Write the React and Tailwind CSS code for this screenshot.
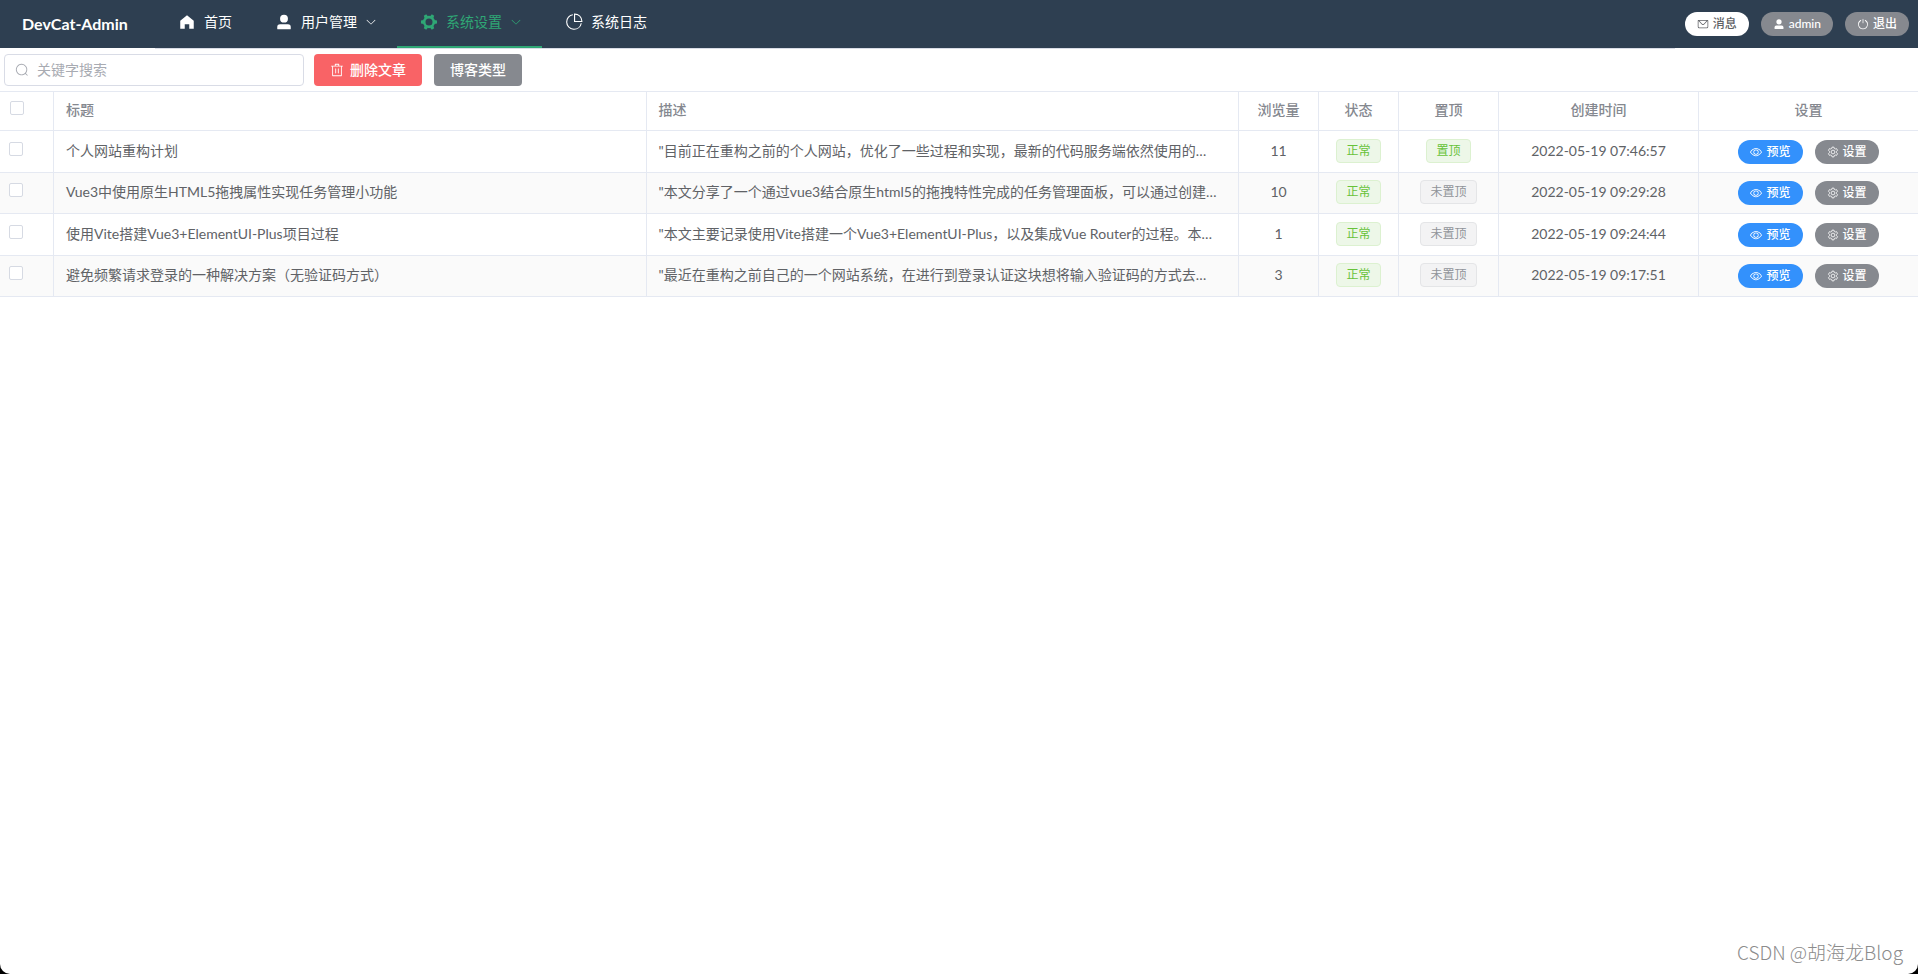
import React from "react";

const icons = {
  home: "M512 128 128 447.936V896h255.936V640H640v256h255.936V447.936z",
  user: "M288 320a224 224 0 1 0 448 0 224 224 0 1 0-448 0zm544 608H160a32 32 0 0 1-32-32v-96a160 160 0 0 1 160-160h448a160 160 0 0 1 160 160v96a32 32 0 0 1-32 32z",
  down: "M831.872 340.864 512 652.672 192.128 340.864a30.592 30.592 0 0 0-42.752 0 29.12 29.12 0 0 0 0 41.6L489.664 714.24a32 32 0 0 0 44.672 0l340.288-331.712a29.12 29.12 0 0 0 0-41.728 30.592 30.592 0 0 0-42.752 0z",
  pie: "M448 68.48v64.832A384.128 384.128 0 0 0 512 896a384.128 384.128 0 0 0 378.688-320h64.768A448.128 448.128 0 0 1 64 512 448.128 448.128 0 0 1 448 68.48zM576 97.28V448h350.72A384.064 384.064 0 0 0 576 97.28zM512 64V33.152A448 448 0 0 1 990.848 512H512V64z",
  message:
    "M128 224v512a64 64 0 0 0 64 64h640a64 64 0 0 0 64-64V224H128zm0-64h768a64 64 0 0 1 64 64v512a128 128 0 0 1-128 128H192A128 128 0 0 1 64 736V224a64 64 0 0 1 64-64zM904 224 656.512 506.88a192 192 0 0 1-289.024 0L120 224h784zm-698.944 0 210.56 240.704a128 128 0 0 0 192.704 0L818.944 224H205.056z",
  power:
    "M352 159.872V230.4a352 352 0 1 0 320 0v-70.528A416.128 416.128 0 0 1 512 960a416 416 0 0 1-160-800.128zM512 64q32 0 32 32v320q0 32-32 32t-32-32V96q0-32 32-32z",
  view: "M512 160c320 0 512 352 512 352S832 864 512 864 0 512 0 512s192-352 512-352zm0 64c-225.28 0-384.128 208.064-436.8 288 52.608 79.872 211.456 288 436.8 288 225.28 0 384.128-208.064 436.8-288-52.608-79.872-211.456-288-436.8-288zm0 64a224 224 0 1 1 0 448 224 224 0 0 1 0-448zm0 64a160.192 160.192 0 0 0-160 160c0 88.192 71.744 160 160 160s160-71.808 160-160-71.744-160-160-160z",
  search:
    "m795.904 750.72 124.992 124.928a32 32 0 0 1-45.248 45.248L750.656 795.904a416 416 0 1 1 45.248-45.248zM480 832a352 352 0 1 0 0-704 352 352 0 0 0 0 704z",
  trash:
    "M160 256H96a32 32 0 0 1 0-64h256V95.936a32 32 0 0 1 32-32h256a32 32 0 0 1 32 32V192h256a32 32 0 1 1 0 64h-64v672a32 32 0 0 1-32 32H192a32 32 0 0 1-32-32V256zm448-64v-64H416v64h192zM224 896h576V256H224v640zm192-128a32 32 0 0 1-32-32V416a32 32 0 0 1 64 0v320a32 32 0 0 1-32 32zm192 0a32 32 0 0 1-32-32V416a32 32 0 0 1 64 0v320a32 32 0 0 1-32 32z",
};

function Icon({ name, className }) {
  return (
    <svg viewBox="0 0 1024 1024" fill="currentColor" aria-hidden="true" className={className}>
      <path d={icons[name]} />
    </svg>
  );
}

function GearSolid({ className }) {
  return (
    <svg viewBox="0 0 1024 1024" aria-hidden="true" className={className}>
      <circle cx="512" cy="512" r="275" fill="none" stroke="currentColor" strokeWidth="150" />
      <g fill="currentColor">
        {[30, 90, 150, 210, 270, 330].map((angle) => (
          <path key={angle} d="M432 56h160l28 160H404z" transform={`rotate(${angle} 512 512)`} />
        ))}
      </g>
    </svg>
  );
}

function GearOutline({ className }) {
  return (
    <svg viewBox="0 0 1024 1024" fill="none" stroke="currentColor" strokeWidth="70" strokeLinejoin="round" aria-hidden="true" className={className}>
      <path d="M432 96h160l34 116 74 43 118-29 80 139-84 87v120l84 87-80 139-118-29-74 43-34 116H432l-34-116-74-43-118 29-80-139 84-87V452l-84-87 80-139 118 29 74-43z" />
      <circle cx="512" cy="512" r="160" />
    </svg>
  );
}

const rows = [
  {
    title: "个人网站重构计划",
    text: '"目前正在重构之前的个人网站，优化了一些过程和实现，最新的代码服务端依然使用的…',
    views: 11,
    pinned: true,
    time: "2022-05-19 07:46:57",
  },
  {
    title: "Vue3中使用原生HTML5拖拽属性实现任务管理小功能",
    text: '"本文分享了一个通过vue3结合原生html5的拖拽特性完成的任务管理面板，可以通过创建…',
    views: 10,
    pinned: false,
    time: "2022-05-19 09:29:28",
  },
  {
    title: "使用Vite搭建Vue3+ElementUI-Plus项目过程",
    text: '"本文主要记录使用Vite搭建一个Vue3+ElementUI-Plus，以及集成Vue Router的过程。本…',
    views: 1,
    pinned: false,
    time: "2022-05-19 09:24:44",
  },
  {
    title: "避免频繁请求登录的一种解决方案（无验证码方式）",
    text: '"最近在重构之前自己的一个网站系统，在进行到登录认证这块想将输入验证码的方式去…',
    views: 3,
    pinned: false,
    time: "2022-05-19 09:17:51",
  },
];

function NavItem({ label, icon, active, arrow }) {
  return (
    <li className="flex">
      <a
        href="#"
        className={`flex h-12 items-center border-b-2 px-5 pb-[2px] text-sm ${
          active ? "border-[#2fa775] text-[#2fa775]" : "border-transparent text-white"
        }`}
      >
        <span className="mr-[5px] flex w-6 justify-center">{icon}</span>
        {label}
        {arrow && <Icon name="down" className="ml-2 size-3" />}
      </a>
    </li>
  );
}

function Pill({ tone, icon, children }) {
  const tones = {
    light: "bg-white text-[#606266]",
    gray: "bg-[#86898f] text-white",
    blue: "bg-[#3391fc] text-white",
  };
  return (
    <button type="button" className={`flex h-6 items-center gap-1 rounded-full px-3 text-xs font-medium ${tones[tone]}`}>
      {icon}
      {children}
    </button>
  );
}

function Tag({ green, children }) {
  return (
    <span
      className={`inline-flex h-6 items-center rounded border px-[9px] text-xs ${
        green ? "border-[#dcf1d0] bg-[#edf7e8] text-[#67c23a]" : "border-[#e4e5e7] bg-[#f3f3f4] text-[#909399]"
      }`}
    >
      {children}
    </span>
  );
}

function Check({ label }) {
  return (
    <input
      type="checkbox"
      aria-label={label}
      className="mb-[6px] block size-[14px] appearance-none rounded-[2px] border border-[#d6dae3] bg-white checked:bg-[#3391fc]"
    />
  );
}

const edge = "border-r border-b border-[#e5e9f2] last:border-r-0";
const cell = `${edge} px-3 pb-[2px]`;

export default function App() {
  return (
    <div className="bg-black font-['Lato','Noto_Sans_CJK_SC',sans-serif]">
      <div className="relative flex min-h-screen flex-col rounded-b-[10px] bg-white">
        <header className="flex h-12 items-center bg-[#2e3f51] pr-[9px]">
          <h1 className="w-[155px] pl-[22px] text-base font-bold text-white">DevCat-Admin</h1>
          <nav className="h-[49px] flex-1 self-start border-b border-[#d9dce6]">
            <ul className="flex">
              <NavItem label="首页" icon={<Icon name="home" className="size-[18px]" />} />
              <NavItem label="用户管理" icon={<Icon name="user" className="size-[18px]" />} arrow />
              <NavItem label="系统设置" icon={<GearSolid className="size-[18px]" />} active arrow />
              <NavItem label="系统日志" icon={<Icon name="pie" className="size-[18px]" />} />
            </ul>
          </nav>
          <div className="flex gap-3 pl-[10px]">
            <Pill tone="light" icon={<Icon name="message" className="size-3" />}>消息</Pill>
            <Pill tone="gray" icon={<Icon name="user" className="size-3" />}>admin</Pill>
            <Pill tone="gray" icon={<Icon name="power" className="size-3" />}>退出</Pill>
          </div>
        </header>

        <main>
          <div className="flex px-1 pt-[6px] pb-[5px]">
            <label className="flex h-8 w-[300px] items-center gap-2 rounded border border-[#d9dce6] px-[10px] text-[#a8abb2]">
              <Icon name="search" className="size-[14px]" />
              <input
                type="text"
                aria-label="关键字搜索"
                placeholder="关键字搜索"
                className="min-w-0 flex-1 text-sm text-[#606266] outline-none placeholder:text-[#a8abb2]"
              />
            </label>
            <button type="button" className="ml-[10px] flex h-8 items-center gap-[6px] rounded bg-[#f96366] px-4 text-sm font-medium text-white">
              <Icon name="trash" className="size-[14px]" />
              删除文章
            </button>
            <button type="button" className="ml-3 h-8 rounded bg-[#86898f] px-4 text-sm font-medium text-white">
              博客类型
            </button>
          </div>

          <table className="w-full table-fixed border-separate border-spacing-0 border-t border-[#e5e9f2] text-center text-sm text-[#606266]">
            <colgroup>
              <col className="w-[54px]" />
              <col />
              <col />
              <col className="w-[80px]" />
              <col className="w-[80px]" />
              <col className="w-[100px]" />
              <col className="w-[200px]" />
              <col className="w-[219px]" />
            </colgroup>
            <thead>
              <tr className="h-[39px] text-[#85888f]">
                <th className={`${edge} pl-[10px]`}><Check label="全选" /></th>
                <th className={`${cell} text-left font-medium`}>标题</th>
                <th className={`${cell} text-left font-medium`}>描述</th>
                <th className={`${cell} font-medium`}>浏览量</th>
                <th className={`${cell} font-medium`}>状态</th>
                <th className={`${cell} font-medium`}>置顶</th>
                <th className={`${cell} font-medium`}>创建时间</th>
                <th className={`${cell} font-medium`}>设置</th>
              </tr>
            </thead>
            <tbody>
              {rows.map((row) => (
                <tr key={row.time} className="h-[42px] even:h-[41px] even:bg-[#fafafa]">
                  <td className={`${edge} pl-[9px]`}><Check label={row.title} /></td>
                  <td className={`${cell} truncate text-left`}>{row.title}</td>
                  <td className={`${cell} truncate text-left`}>{row.text}</td>
                  <td className={cell}>{row.views}</td>
                  <td className={cell}><div className="flex justify-center"><Tag green>正常</Tag></div></td>
                  <td className={cell}><div className="flex justify-center"><Tag green={row.pinned}>{row.pinned ? "置顶" : "未置顶"}</Tag></div></td>
                  <td className={cell}>{row.time}</td>
                  <td className={`${edge} px-3`}>
                    <div className="flex justify-center gap-3">
                      <Pill tone="blue" icon={<Icon name="view" className="size-3" />}>预览</Pill>
                      <Pill tone="gray" icon={<GearOutline className="size-3" />}>设置</Pill>
                    </div>
                  </td>
                </tr>
              ))}
            </tbody>
          </table>
        </main>

        <p className="absolute right-[15px] bottom-2 font-['Noto_Sans_CJK_SC',sans-serif] text-[19px] font-light text-[#8c8c8c]">
          CSDN @胡海龙Blog
        </p>
      </div>
    </div>
  );
}
